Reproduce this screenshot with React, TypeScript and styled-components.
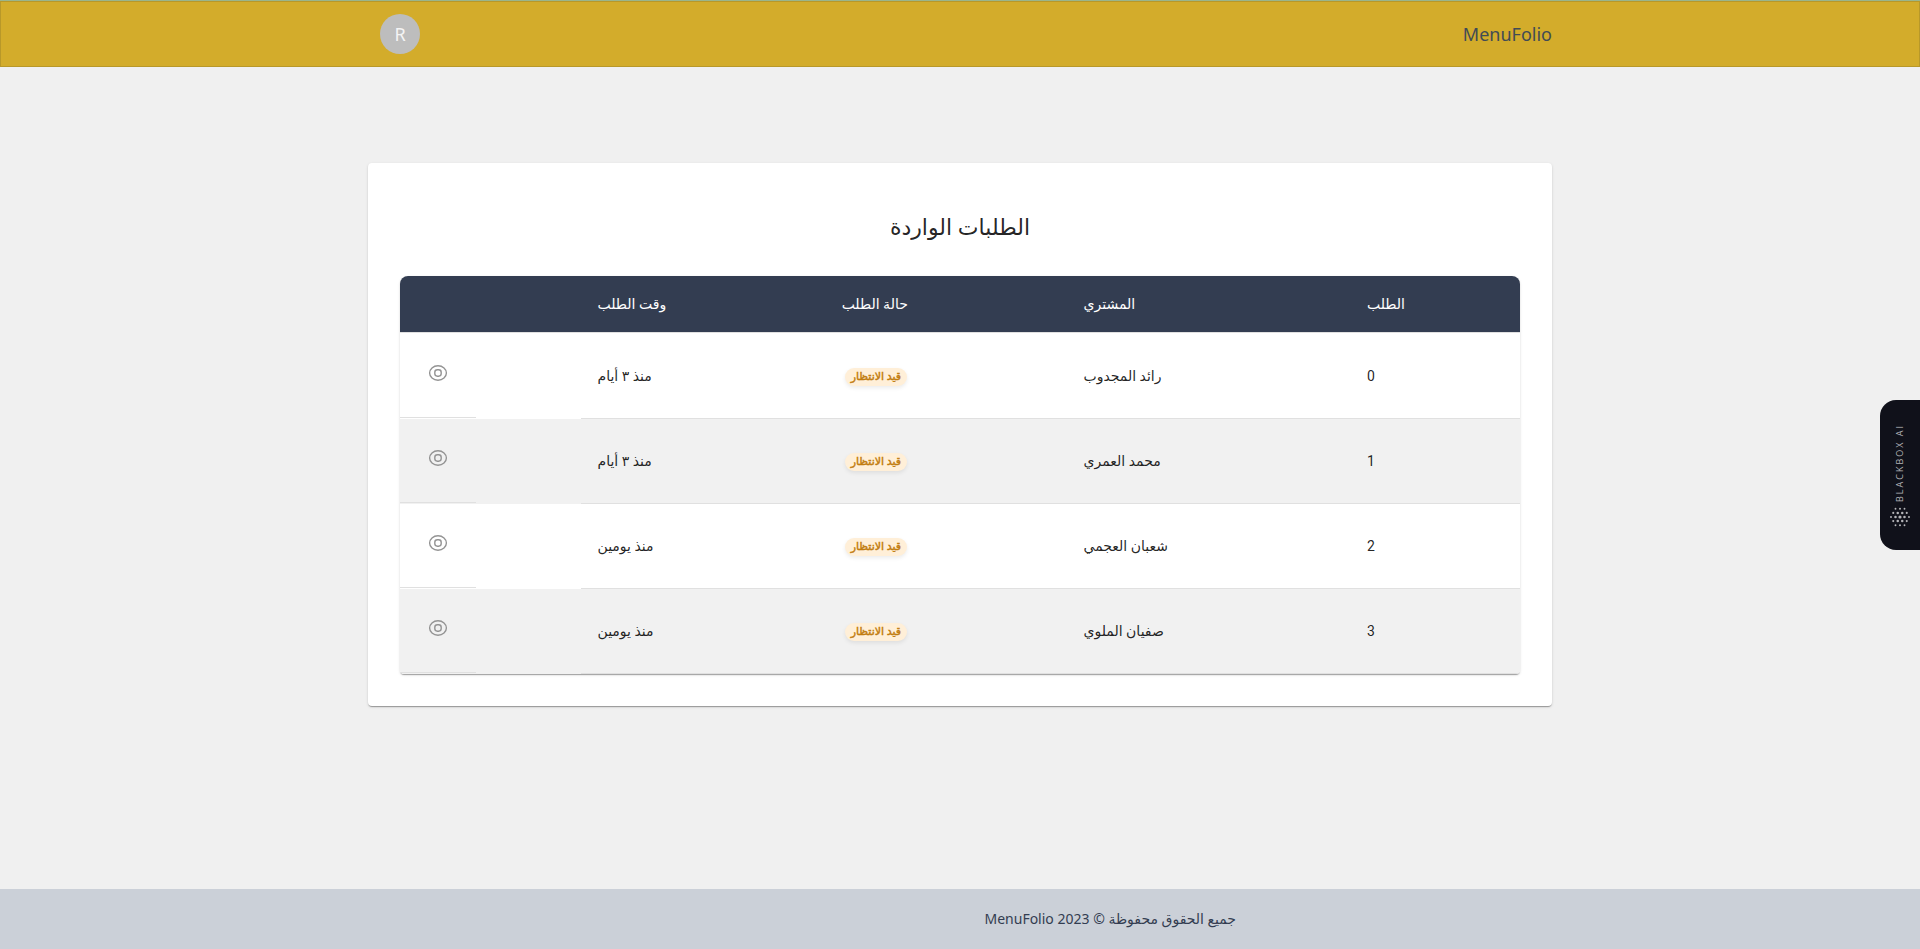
import React from 'react';
import styled, { createGlobalStyle } from 'styled-components';

const GlobalStyle = createGlobalStyle`
  *, *::before, *::after { box-sizing: border-box; }
  body {
    margin: 0;
    background: #f0f0f0;
    color: rgba(0, 0, 0, 0.87);
    font-family: Roboto, "DejaVu Sans", sans-serif;
    font-size: 14px;
  }
`;

const displayFont = '"Noto Sans", "DejaVu Sans", sans-serif';

const Page = styled.div`
  min-height: 100vh;
  display: flex;
  flex-direction: column;
`;

const Header = styled.header`
  border-top: 1px solid #9ab58c;
  background: #d3ac2b;
`;

const HeaderFrame = styled.div`
  border: 1px solid #b89829;
  padding: 12px 0;
`;

const Container = styled.div`
  width: 100%;
  max-width: 1232px;
  margin: 0 auto;
  padding: 0 24px;
`;

const HeaderRow = styled(Container)`
  display: flex;
  align-items: center;
  justify-content: space-between;
`;

const Brand = styled.a`
  color: #414b55;
  font: 400 18px/32px ${displayFont};
  text-decoration: none;
`;

const Avatar = styled.button`
  width: 40px;
  height: 40px;
  margin-left: 12px;
  padding: 0;
  border: 0;
  border-radius: 50%;
  background: #bdbdbd;
  color: #f4f4f4;
  font: 400 18px/40px ${displayFont};
`;

const Main = styled.main`
  flex: 1;
  padding: 96px 0;
`;

const paperShadow = `0 2px 1px -1px rgba(0, 0, 0, 0.2),
    0 1px 1px 0 rgba(0, 0, 0, 0.14),
    0 1px 3px 0 rgba(0, 0, 0, 0.12)`;

const Card = styled.section`
  padding: 43px 32px 32px;
  border-radius: 4px;
  background: #fff;
  box-shadow: ${paperShadow};
`;

const Title = styled.h1`
  margin: 0 0 30px;
  text-align: center;
  font: 400 22px/40px ${displayFont};
`;

const TablePaper = styled.div`
  overflow: hidden;
  border-radius: 8px 8px 4px 4px;
  box-shadow: ${paperShadow};
`;

const Table = styled.table`
  width: 100%;
  table-layout: fixed;
  border-collapse: separate;
  border-spacing: 0;
`;

const Column = styled.col<{ $share: number }>`
  width: ${({ $share }) => $share}%;
`;

const HeadCell = styled.th`
  height: 57px;
  padding: 0 16px;
  border-bottom: 1px solid #e0e0e0;
  background: #333d51;
  color: #fff;
  font-weight: 400;
  text-align: left;
`;

const Cell = styled.td`
  height: 85px;
  padding: 0 16px;
  border-bottom: 1px solid #e0e0e0;
  text-align: left;
`;

const BodyRow = styled.tr`
  background: #fff;
  &:nth-child(even) { background: #f1f1f1; }
  &:first-child > ${Cell} { height: 86px; }
`;

const ActionCell = styled.td`
  height: 85px;
  padding: 0;
  vertical-align: top;
`;

const ActionBox = styled.div`
  display: flex;
  align-items: center;
  justify-content: center;
  width: 76px;
  height: 85px;
  margin-right: auto;
  padding-bottom: 5px;
  border-bottom: 1px solid #e0e0e0;

  ${BodyRow}:not(:first-child) & { height: 84px; }
`;

const ViewButton = styled.button`
  display: flex;
  padding: 8px;
  border: 0;
  border-radius: 50%;
  background: transparent;
  color: #949494;
`;

const Badge = styled.span`
  display: inline-block;
  margin-left: 3px;
  padding: 0 6px;
  border-radius: 9px;
  background: #ffefd8;
  box-shadow: 0 2px 4px rgba(0, 0, 0, 0.08);
  color: #c27c0e;
  font-size: 11px;
  font-weight: 500;
  line-height: 18px;
  -webkit-text-stroke: 0.04em currentColor;
  vertical-align: -1px;
  white-space: nowrap;
`;

const Footer = styled.footer`
  padding: 18px 0;
  background: #cbd0d8;
`;

const Copyright = styled.p`
  margin: 0;
  padding-right: 316px;
  color: #333d51;
  font: 400 14px/24px ${displayFont};
`;

const AssistantTab = styled.button`
  position: fixed;
  top: 400px;
  right: 0;
  display: flex;
  flex-direction: column;
  align-items: center;
  justify-content: flex-end;
  gap: 5px;
  width: 40px;
  height: 150px;
  padding: 0 0 23px;
  border: 0;
  border-radius: 16px 0 0 16px;
  background: #10111a;
  color: #b4b4b8;
`;

const AssistantLabel = styled.span`
  writing-mode: vertical-rl;
  transform: rotate(180deg);
  font: 400 9px/12px "Open Sans", sans-serif;
  letter-spacing: 2px;
  white-space: nowrap;
`;

const EyeIcon = () => (
  <svg width="20" height="20" viewBox="0 0 20 20" fill="none" stroke="currentColor" strokeWidth="1.4" aria-hidden="true">
    <path d="M1.6 10C1.6 6.2 5.2 2.8 10 2.8S18.4 6.2 18.4 10 14.8 17.2 10 17.2 1.6 13.8 1.6 10Z" />
    <rect x="6.8" y="6.8" width="6.4" height="6.4" rx="2.6" />
  </svg>
);

const dotRows = [3, 4, 5, 4, 3];

const DotsLogo = () => (
  <svg width="20" height="20" viewBox="0 0 20 20" fill="currentColor" aria-hidden="true">
    {dotRows.map((count, row) =>
      Array.from({ length: count }, (_, i) => {
        const cx = 10 + (i - (count - 1) / 2) * 4.5;
        const cy = 10 + (row - 2) * 4.1;
        const r = 1.6 - Math.hypot(cx - 10, cy - 10) * 0.07;
        return <circle key={`${row}-${i}`} cx={cx} cy={cy} r={r} />;
      }),
    )}
  </svg>
);

const orders = [
  { id: 0, buyer: 'رائد المجدوب', time: 'منذ ٣ أيام' },
  { id: 1, buyer: 'محمد العمري', time: 'منذ ٣ أيام' },
  { id: 2, buyer: 'شعبان العجمي', time: 'منذ يومين' },
  { id: 3, buyer: 'صفيان الملوي', time: 'منذ يومين' },
];

export default function App() {
  return (
    <Page dir="rtl" lang="ar">
      <GlobalStyle />
      <Header>
        <HeaderFrame>
          <HeaderRow>
            <Brand href="#">MenuFolio</Brand>
            <Avatar type="button">R</Avatar>
          </HeaderRow>
        </HeaderFrame>
      </Header>
      <Main>
        <Container>
          <Card>
            <Title>الطلبات الواردة</Title>
            <TablePaper>
              <Table>
                <colgroup>
                  <Column $share={15.1} />
                  <Column $share={25.3} />
                  <Column $share={21.6} />
                  <Column $share={21.8} />
                  <Column $share={16.2} />
                </colgroup>
                <thead>
                  <tr>
                    <HeadCell scope="col">الطلب</HeadCell>
                    <HeadCell scope="col">المشتري</HeadCell>
                    <HeadCell scope="col">حالة الطلب</HeadCell>
                    <HeadCell scope="col">وقت الطلب</HeadCell>
                    <HeadCell scope="col" />
                  </tr>
                </thead>
                <tbody>
                  {orders.map((order) => (
                    <BodyRow key={order.id}>
                      <Cell>{order.id}</Cell>
                      <Cell>{order.buyer}</Cell>
                      <Cell><Badge>قيد الانتظار</Badge></Cell>
                      <Cell>{order.time}</Cell>
                      <ActionCell>
                        <ActionBox>
                          <ViewButton type="button" aria-label="عرض الطلب"><EyeIcon /></ViewButton>
                        </ActionBox>
                      </ActionCell>
                    </BodyRow>
                  ))}
                </tbody>
              </Table>
            </TablePaper>
          </Card>
        </Container>
      </Main>
      <Footer>
        <Container>
          <Copyright>جميع الحقوق محفوظة © 2023 <bdi>MenuFolio</bdi></Copyright>
        </Container>
      </Footer>
      <AssistantTab type="button" dir="ltr">
        <AssistantLabel>BLACKBOX AI</AssistantLabel>
        <DotsLogo />
      </AssistantTab>
    </Page>
  );
}
